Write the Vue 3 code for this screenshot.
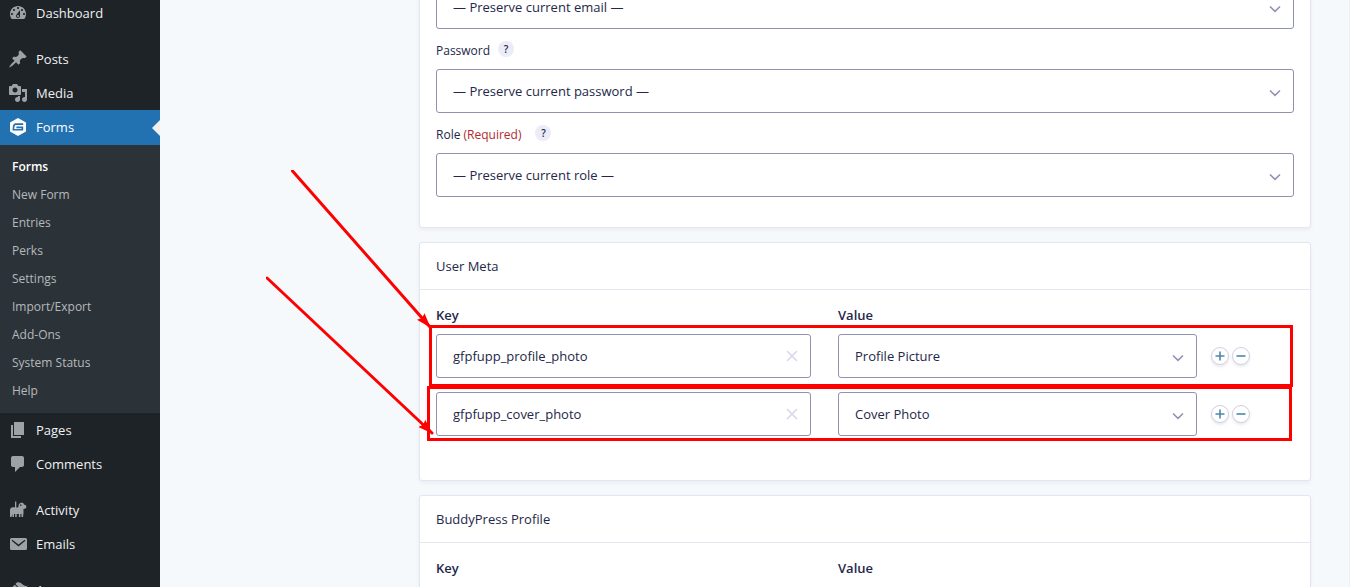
<script setup>
import { reactive } from 'vue'

const icons = {
  dashboard: 'M3.76 16h12.48c1.1-1.37 1.76-3.11 1.76-5 0-4.42-3.58-8-8-8s-8 3.58-8 8c0 1.89.66 3.63 1.76 5zM10 4c.55 0 1 .45 1 1s-.45 1-1 1-1-.45-1-1 .45-1 1-1zM6 6c.55 0 1 .45 1 1s-.45 1-1 1-1-.45-1-1 .45-1 1-1zm8 0c.55 0 1 .45 1 1s-.45 1-1 1-1-.45-1-1 .45-1 1-1zm-5.37 5.55L12 7v6c0 1.1-.9 2-2 2s-2-.9-2-2c0-.57.24-1.08.63-1.45zM4 10c.55 0 1 .45 1 1s-.45 1-1 1-1-.45-1-1 .45-1 1-1zm12 0c.55 0 1 .45 1 1s-.45 1-1 1-1-.45-1-1 .45-1 1-1zm-5 3c0-.55-.45-1-1-1s-1 .45-1 1 .45 1 1 1 1-.45 1-1z',
  posts: 'M10.44 3.02l1.82-1.82 6.36 6.35-1.83 1.82c-1.05-.68-2.48-.57-3.41.36l-.75.75c-.92.93-1.04 2.35-.35 3.41l-1.83 1.82-2.41-2.41-2.8 2.79c-.42.42-3.38 2.71-3.8 2.29s1.86-3.39 2.28-3.81l2.79-2.79L4.1 9.36l1.83-1.82c1.05.69 2.48.57 3.4-.36l.75-.75c.93-.92 1.05-2.35.36-3.41z',
  media: 'M13 11V4c0-.55-.45-1-1-1h-1.67L9 1H5L3.67 3H2c-.55 0-1 .45-1 1v7c0 .55.45 1 1 1h10c.55 0 1-.45 1-1zM7 4.5c1.38 0 2.5 1.12 2.5 2.5S8.38 9.5 7 9.5 4.5 8.38 4.5 7 5.62 4.5 7 4.5zM14 6h5v10.5c0 1.38-1.12 2.5-2.5 2.5S14 17.88 14 16.5s1.12-2.5 2.5-2.5c.17 0 .34.02.5.05V9h-3V6zm-4 8.05V13h2v3.5c0 1.38-1.12 2.5-2.5 2.5S7 17.88 7 16.5 8.12 14 9.5 14c.17 0 .34.02.5.05z',
  forms: 'M10 1L17.6 5.2Q18 5.5 18 6V14Q18 14.5 17.6 14.8L10 19L2.4 14.8Q2 14.5 2 14V6Q2 5.5 2.4 5.2ZM7.6 6.2C5.2 6.2 4.6 9.2 4.6 13.6H15.2V9.6H8.4V11.2H13.5V12H6.3C6.3 9.6 6.6 7.9 8 7.9H15.2V6.2Z',
  pages: 'M6 15V2h10v13H6zm-1 1h8v2H3V5h2v11z',
  comments: 'M5 2h9c1.1 0 2 .9 2 2v7c0 1.1-.9 2-2 2h-2l-5 5v-5H5c-1.1 0-2-.9-2-2V4c0-1.1.9-2 2-2z',
  activity: 'M7 1.500H8.300V7.500H10.200L10.800 4.600C11.600 2.600 13.800 2.200 15.200 3.100L16 4.600L18.200 5.600V8L16.800 8.800H15.500V12.800L15 17H13.500V14H12.400V17H10.900V14H8.700V17H7.200V14H6V17H4.500V14L3.500 17H2V10.300C2 8.600 3 7.500 4.800 7.300H7ZM12.100 4.500V5.900H13.400V4.500Z',
  emails: 'M3.5 4h14Q19 4 19 5.5v9Q19 16 17.500 16h-14Q2 16 2 14.500v-9Q2 4 3.500 4zM4.3 5.700L3.600 6.700L10.500 12.600L17.400 6.700L16.700 5.700L10.500 10.600z',
  appearance: 'M14.48 11.06L7.41 3.99l1.5-1.5c.5-.56 2.3-.47 3.51.32 1.21.8 1.43 1.28 2.91 2.1 1.18.64 2.45 1.26 4.45.85zm-.71.71L6.7 4.7 4.93 6.47c-.39.39-.39 1.02 0 1.41l1.06 1.06c.39.39.39 1.03 0 1.42-.6.6-1.43 1.11-2.21 1.69-.35.26-.7.53-1.01.84C1.43 14.23.4 16.08 1.4 17.07c.99 1 2.84-.03 4.18-1.36.31-.31.58-.66.85-1.02.57-.78 1.08-1.61 1.69-2.21.39-.39 1.02-.39 1.41 0l1.06 1.06c.39.39 1.02.39 1.41 0z'
}

const menu = [
  { label: 'Dashboard', icon: 'dashboard' },
  { label: 'Posts', icon: 'posts', group: true },
  { label: 'Media', icon: 'media' },
  {
    label: 'Forms',
    icon: 'forms',
    current: true,
    children: ['Forms', 'New Form', 'Entries', 'Perks', 'Settings', 'Import/Export', 'Add-Ons', 'System Status', 'Help']
  },
  { label: 'Pages', icon: 'pages' },
  { label: 'Comments', icon: 'comments' },
  { label: 'Activity', icon: 'activity', group: true },
  { label: 'Emails', icon: 'emails' },
  { label: 'Appearance', icon: 'appearance', group: true }
]

const fields = [
  { id: 'email', label: 'Email', option: '— Preserve current email —', partial: true },
  { id: 'password', label: 'Password', option: '— Preserve current password —' },
  { id: 'role', label: 'Role', required: true, option: '— Preserve current role —' }
]

const metaRows = reactive([
  { key: 'gfpfupp_profile_photo', value: 'Profile Picture', mark: 'mark-first' },
  { key: 'gfpfupp_cover_photo', value: 'Cover Photo', mark: 'mark-second' }
])
</script>

<template>
  <div class="page">
    <nav class="sidebar" aria-label="Main menu">
      <ul class="menu">
        <li v-for="item in menu" :key="item.label" :class="{ group: item.group, current: item.current }">
          <a href="#" class="menu-link">
            <svg class="menu-icon" viewBox="0 0 20 20" aria-hidden="true">
              <path :d="icons[item.icon]" fill-rule="evenodd" />
            </svg>
            <span>{{ item.label }}</span>
          </a>
          <ul v-if="item.children" class="submenu">
            <li v-for="(child, i) in item.children" :key="child">
              <a href="#" :class="{ active: i === 0 }">{{ child }}</a>
            </li>
          </ul>
        </li>
      </ul>
    </nav>

    <main class="content">
      <section class="card fields">
        <div v-for="f in fields" :key="f.id" class="field">
          <div v-if="!f.partial" class="field-head">
            <label :for="f.id">{{ f.label }} <span v-if="f.required" class="required">(Required)</span></label>
            <button type="button" class="help" :aria-label="'Help for ' + f.label">?</button>
          </div>
          <div class="select-wrap">
            <select :id="f.id" class="control" :aria-label="f.label">
              <option>{{ f.option }}</option>
            </select>
            <svg class="chevron" viewBox="0 0 12 8" aria-hidden="true"><path d="M1 1.500L6 6.300L11 1.500" /></svg>
          </div>
        </div>
      </section>

      <section class="card">
        <h2 class="card-title">User Meta</h2>
        <div class="card-body">
          <div class="columns headings">
            <span>Key</span>
            <span>Value</span>
          </div>
          <div class="rows">
            <div v-for="(row, i) in metaRows" :key="i" class="columns row">
              <div class="key-cell">
                <div class="key-wrap">
                  <input v-model="row.key" class="control" type="text" :aria-label="'Key ' + (i + 1)" />
                  <button type="button" class="clear" aria-label="Clear key" @click="row.key = ''">
                    <svg viewBox="0 0 12 12" aria-hidden="true"><path d="M1 1L11 11M11 1L1 11" /></svg>
                  </button>
                </div>
              </div>
              <div class="select-wrap">
                <select class="control" :aria-label="'Value ' + (i + 1)">
                  <option>{{ row.value }}</option>
                </select>
                <svg class="chevron" viewBox="0 0 12 8" aria-hidden="true"><path d="M1 1.500L6 6.300L11 1.500" /></svg>
              </div>
              <div class="actions">
                <button type="button" class="round" aria-label="Add row">
                  <svg viewBox="0 0 16 16" aria-hidden="true"><path d="M3.500 8H12.500M8 3.500V12.500" /></svg>
                </button>
                <button type="button" class="round" aria-label="Remove row">
                  <svg viewBox="0 0 16 16" aria-hidden="true"><path d="M3.500 8H12.500" /></svg>
                </button>
              </div>
              <div class="mark" :class="row.mark"></div>
            </div>
            <svg class="arrows" viewBox="0 0 170 270" aria-hidden="true">
              <defs>
                <marker id="head" markerUnits="userSpaceOnUse" markerWidth="16" markerHeight="12" refX="14" refY="6" orient="auto">
                  <path d="M0 1L15 6L0 11L2 6Z" fill="#f00" />
                </marker>
              </defs>
              <path d="M26.500 1L164 157" marker-end="url(#head)" />
              <path d="M1 108L166 263" marker-end="url(#head)" />
            </svg>
          </div>
        </div>
      </section>

      <section class="card">
        <h2 class="card-title">BuddyPress Profile</h2>
        <div class="card-body">
          <div class="columns headings">
            <span>Key</span>
            <span>Value</span>
          </div>
        </div>
      </section>
    </main>
  </div>
</template>

<style>
body {
  margin: 0;
  overflow: hidden;
  background: #f6f9fc;
}
</style>

<style scoped>
.page {
  display: flex;
  height: 100vh;
  overflow: hidden;
  font-family: "Segoe UI", "Open Sans", "Noto Sans", sans-serif;
  font-size: 13px;
  color: #242748;
  background: #f6f9fc;
}
.page * {
  box-sizing: border-box;
}
ul {
  list-style: none;
  margin: 0;
  padding: 0;
}
.sidebar {
  flex: 0 0 160px;
  background: #1d2327;
}
.menu {
  margin-top: -4px;
}
.group {
  margin-top: 12px;
}
.menu-link {
  display: flex;
  align-items: center;
  gap: 8px;
  height: 34px;
  padding-left: 8px;
  color: #f0f0f1;
  font-size: 13px;
  text-decoration: none;
}
.menu-icon {
  width: 20px;
  height: 20px;
  fill: #9ca2a7;
}
.current > .menu-link {
  position: relative;
  height: 35px;
  padding-bottom: 1px;
  background: #2271b1;
  color: #fff;
}
.current .menu-icon {
  fill: #fff;
}
.current > .menu-link::after {
  content: "";
  position: absolute;
  right: 0;
  top: 10px;
  border: 8px solid transparent;
  border-left-width: 0;
  border-right-color: #f0f0f1;
}
.submenu {
  padding: 8px 0;
  background: #2c3338;
}
.submenu a {
  display: block;
  padding-left: 12px;
  line-height: 28px;
  font-size: 12px;
  color: #b5b9bd;
  text-decoration: none;
}
.submenu .active {
  color: #fff;
  font-weight: 600;
}
.content {
  flex: 1;
  min-width: 0;
  display: flex;
  flex-direction: column;
  gap: 14px;
  padding: 0 38px 0 259px;
  border-right: 1px solid #eceff3;
}
.card {
  flex: none;
  background: #fff;
  border: 1px solid #e3e6f0;
  border-radius: 3px;
  box-shadow: 0 2px 4px rgba(40, 50, 100, 0.06);
}
.fields {
  margin-top: -16px;
  padding: 0 16px 30px;
}
.field-head {
  display: flex;
  align-items: center;
  gap: 8px;
  height: 20px;
  margin: 11px 0 9px;
  font-size: 12px;
  font-weight: 500;
}
.required {
  margin-right: 6px;
  color: #b42a2f;
}
.help {
  width: 16px;
  height: 16px;
  margin-bottom: 2px;
  padding: 0;
  border: 0;
  border-radius: 50%;
  background: #ecebf8;
  color: #242748;
  font: 600 10px/16px "Open Sans", sans-serif;
}
.select-wrap,
.key-wrap {
  position: relative;
}
.control {
  display: block;
  appearance: none;
  width: 100%;
  height: 44px;
  margin: 0;
  padding: 0 40px 0 16px;
  border: 1px solid #9092b2;
  border-radius: 3px;
  background: #fff;
  color: #242748;
  font-family: inherit;
  font-size: 13px;
}
.chevron {
  position: absolute;
  right: 13px;
  top: 20px;
  width: 12px;
  height: 8px;
  fill: none;
  stroke: #9092b2;
  stroke-width: 1.6;
  pointer-events: none;
}
.card-title {
  height: 47px;
  margin: 0;
  padding-left: 16px;
  border-bottom: 1px solid #e6e8f1;
  font-size: 13px;
  font-weight: 500;
  line-height: 47px;
}
.card-body {
  padding: 15px 16px 44px;
}
.columns {
  display: grid;
  grid-template-columns: 402fr 359fr 97px;
}
.headings {
  margin-bottom: 9px;
  line-height: 20px;
  font-weight: 600;
}
.rows {
  position: relative;
  display: grid;
  gap: 14px;
}
.row {
  position: relative;
}
.key-cell {
  padding-right: 27px;
}
.clear {
  position: absolute;
  right: 13px;
  top: 16px;
  width: 12px;
  height: 12px;
  padding: 0;
  border: 0;
  background: none;
}
.clear svg {
  display: block;
  stroke: #d5d7e9;
  stroke-width: 1.5;
}
.actions {
  display: flex;
  align-items: center;
  gap: 3px;
  padding-left: 14px;
}
.round {
  width: 18px;
  height: 18px;
  padding: 0;
  border: 1px solid #d2d0e2;
  border-radius: 50%;
  background: #fff;
  box-shadow: 0 2px 3px rgba(40, 50, 100, 0.1);
}
.round svg {
  display: block;
  width: 16px;
  height: 16px;
  stroke: #4a87b0;
  stroke-width: 1.6;
}
.mark {
  position: absolute;
  border: 3px solid #f00;
  pointer-events: none;
}
.mark-first {
  inset: -9px 1px -9px -7px;
}
.mark-second {
  inset: -6px 2px -5px -9px;
}
.arrows {
  position: absolute;
  left: -170px;
  top: -164px;
  width: 170px;
  height: 270px;
  fill: none;
  stroke: #f00;
  stroke-width: 3;
  stroke-linecap: round;
  pointer-events: none;
}
.arrows marker path {
  stroke: none;
}
</style>
